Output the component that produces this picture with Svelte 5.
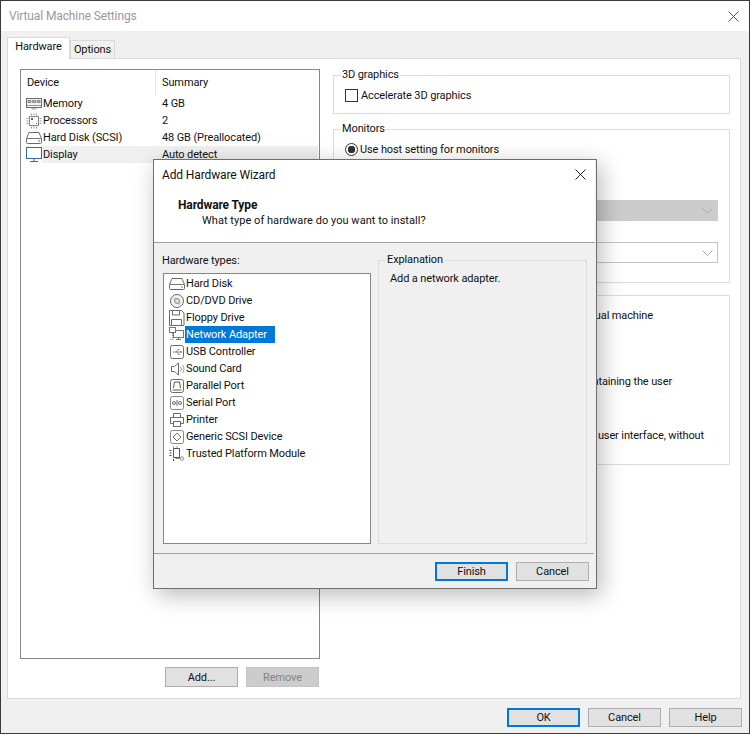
<script>
  const devices = [
    { icon: 'memory', name: 'Memory', summary: '4 GB' },
    { icon: 'cpu', name: 'Processors', summary: '2' },
    { icon: 'disk', name: 'Hard Disk (SCSI)', summary: '48 GB (Preallocated)' },
    { icon: 'display', name: 'Display', summary: 'Auto detect', hover: true }
  ];
  const types = [
    { icon: 'disk', name: 'Hard Disk' },
    { icon: 'cd', name: 'CD/DVD Drive' },
    { icon: 'floppy', name: 'Floppy Drive' },
    { icon: 'net', name: 'Network Adapter', selected: true },
    { icon: 'usb', name: 'USB Controller' },
    { icon: 'sound', name: 'Sound Card' },
    { icon: 'parallel', name: 'Parallel Port' },
    { icon: 'serial', name: 'Serial Port' },
    { icon: 'printer', name: 'Printer' },
    { icon: 'scsi', name: 'Generic SCSI Device' },
    { icon: 'tpm', name: 'Trusted Platform Module' }
  ];
</script>

{#snippet icon(kind)}
  <svg class="ico" width="16" height="16" viewBox="0 0 16 16" fill="none" stroke="#6a6a6a" stroke-width="1">
    {#if kind === 'memory'}
      <rect x="0.5" y="2.5" width="15" height="9" fill="#f2f2f2"/>
      <path d="M2 4.500h3v2H2zM6.500 4.500h3v2h-3zM11 4.500h3v2h-3z" fill="#bbb" stroke="#888"/>
      <path d="M1 9.500h14M6 11.500v1.500h4v-1.500" stroke="#999"/>
    {:else if kind === 'cpu'}
      <rect x="3.500" y="3.500" width="9" height="9" fill="#fff" stroke="#888"/>
      <path d="M5.500 .5v2M8 .5v2M10.500 .5v2M5.500 13.500v2M8 13.500v2M10.500 13.500v2M.5 5.500h2M.5 8h2M.5 10.500h2M13.500 5.500h2M13.500 8h2M13.500 10.500h2" stroke="#999"/>
      <path d="M5 5h2v2H5zM10 10h1v1h-1z" fill="#666" stroke="none"/>
    {:else if kind === 'disk'}
      <path d="M.5 8.500 3 2.500h10l2.500 6v4a1 1 0 0 1-1 1h-13a1 1 0 0 1-1-1z" fill="#fff"/>
      <path d="M1 8.500h14M12 11h2" stroke="#777"/>
    {:else if kind === 'display'}
      <rect x="0.500" y="0.500" width="15" height="11" stroke="#2f6ea5" fill="#fff"/>
      <path d="M4 14.500h8M8 12v2" stroke="#2f6ea5"/>
    {:else if kind === 'cd'}
      <circle cx="8" cy="8" r="6.500" fill="#f4f4f4"/>
      <circle cx="8" cy="8" r="2.500" fill="#ddd" stroke="#888"/>
      <path d="M4.500 6.500A4 4 0 0 1 6.500 4.500M11.500 9.500A4 4 0 0 1 9.500 11.500" stroke="#aaa"/>
    {:else if kind === 'floppy'}
      <path d="M.5 .5h12l2.500 2.500v12.500H.5z" fill="#fff"/>
      <path d="M3.500 .5v4.500h7V.5M2.500 15.500V9.500h10v6"/>
    {:else if kind === 'net'}
      <rect x="4.500" y="3.500" width="10" height="7" fill="#fff" stroke="#777"/>
      <rect x="0.500" y="0.500" width="6" height="5" fill="#fff" stroke="#777"/>
      <path d="M9.500 10.500v2M7 12.500h5" stroke="#777"/>
      <path d="M1.500 12.500h4M3.500 6v6" stroke="#2f86cf" stroke-dasharray="1 1"/>
    {:else if kind === 'usb'}
      <rect x="1.500" y="1.500" width="13" height="13" rx="2" fill="#fff"/>
      <path d="M4 8h8M7 8l2-2.500h1.500M8 8l1.500 2.500H11" stroke="#888"/>
      <circle cx="12" cy="8" r="1" fill="#888" stroke="none"/>
    {:else if kind === 'sound'}
      <path d="M2.500 5.500h3l4-3.500v12l-4-3.500h-3z" fill="#fff"/>
      <path d="M11.500 5.500a4 4 0 0 1 0 5M13.500 4a6 6 0 0 1 0 8" stroke="#999"/>
    {:else if kind === 'parallel'}
      <rect x="1.500" y="1.500" width="13" height="13" rx="2" fill="#fff"/>
      <path d="M4.500 10 5.500 4h5l1 6M3.500 12h9" stroke="#555"/>
    {:else if kind === 'serial'}
      <rect x="1.500" y="1.500" width="13" height="13" rx="2" fill="#fff" stroke="#888"/>
      <circle cx="5" cy="8" r="1.500" stroke="#666"/>
      <circle cx="11" cy="8" r="1.500" stroke="#666"/>
      <path d="M8 5v6" stroke="#666"/>
    {:else if kind === 'printer'}
      <path d="M4.500 5V1.500h7V5M1.500 5.500h13v6h-3M4.500 11.500h-3v-6" fill="#fff"/>
      <rect x="4.500" y="9.500" width="7" height="5" fill="#fff"/>
    {:else if kind === 'scsi'}
      <rect x="1.500" y="1.500" width="13" height="13" rx="2" fill="#fff" stroke="#888"/>
      <path d="M8 4 12 8 8 12 4 8z" stroke="#777"/>
    {:else if kind === 'tpm'}
      <path d="M4.500 2.500h6v9h-6z" fill="#fff" stroke="#555"/>
      <path d="M.5 4.500h2M.5 7h2M.5 9.500h2M4.500 .5v1M8 .5v1M4.500 13v2" stroke="#444"/>
      <circle cx="13" cy="12.500" r="1.700" stroke="#888"/>
      <path d="M6.500 12.500h5" stroke="#888"/>
    {/if}
  </svg>
{/snippet}

{#snippet closeX()}
  <svg width="11" height="11" viewBox="0 0 11 11" fill="none" stroke="currentColor"><path d="M.5.500l10 10M10.500.500l-10 10"/></svg>
{/snippet}

{#snippet chevron()}
  <svg class="chev" width="11" height="6" viewBox="0 0 11 6" fill="none" stroke="#a8a8a8"><path d="M.5.500l5 5 5-5"/></svg>
{/snippet}

<div class="window">
  <header class="titlebar">
    <span>Virtual Machine Settings</span>
    <span class="close dim">{@render closeX()}</span>
  </header>

  <div class="body">
    <div class="tabs">
      <div class="tab active">Hardware</div>
      <div class="tab">Options</div>
    </div>

    <div class="panel">
      <div class="leftcol">
        <div class="devices">
          <div class="devhead">
            <div class="c1">Device</div>
            <div class="c2">Summary</div>
          </div>
          {#each devices as d}
            <div class="devrow">
              <span class="devicon">{@render icon(d.icon)}</span>
              <div class="devcells" class:hover={d.hover}>
                <div class="devname">{d.name}</div>
                <div>{d.summary}</div>
              </div>
            </div>
          {/each}
        </div>
        <div class="devbtns">
          <div class="btn">Add...</div>
          <div class="btn disabled">Remove</div>
        </div>
      </div>

      <div class="rightcol">
        <fieldset class="group g3d">
          <legend>3D graphics</legend>
          <div class="opt"><span class="check"></span><span>Accelerate 3D graphics</span></div>
        </fieldset>
        <fieldset class="group gmon">
          <legend>Monitors</legend>
          <div class="opt radio-opt"><span class="radio"></span><span>Use host setting for monitors</span></div>
          <div class="select gray">{@render chevron()}</div>
          <div class="select">{@render chevron()}</div>
        </fieldset>
        <div class="group gscale">
          <div class="line l1">Automatically adapt to the size of the virtual machine</div>
          <div class="line l2">Stretch the display while maintaining the user</div>
          <div class="line l3">Stretch to fill the user interface, without</div>
        </div>
      </div>
    </div>

    <div class="footer">
      <div class="btn primary">OK</div>
      <div class="btn">Cancel</div>
      <div class="btn">Help</div>
    </div>
  </div>

  <div class="dialog">
    <div class="dhead">
      <div class="dtitle">
        <span>Add Hardware Wizard</span>
        <span class="close">{@render closeX()}</span>
      </div>
      <div class="dstrong">Hardware Type</div>
      <div class="dsub">What type of hardware do you want to install?</div>
    </div>
    <div class="dmain">
      <div class="typescol">
        <div class="typeslabel">Hardware types:</div>
        <div class="typeslist">
          {#each types as t}
            <div class="typerow">
              {@render icon(t.icon)}
              <span class="typename" class:selected={t.selected}>{t.name}</span>
            </div>
          {/each}
        </div>
      </div>
      <fieldset class="explain">
        <legend>Explanation</legend>
        <div class="explaintext">Add a network adapter.</div>
      </fieldset>
    </div>
    <div class="dfoot">
      <div class="btn primary">Finish</div>
      <div class="btn">Cancel</div>
    </div>
  </div>
</div>

<style>
  :global(body) { margin: 0; background: #f0f0f0; }
  .window {
    position: relative;
    box-sizing: border-box;
    width: 750px;
    height: 734px;
    border: 1px solid #3a3a3a;
    background: #f0f0f0;
    font: 11px Roboto, "Noto Sans", sans-serif;
    letter-spacing: -0.12px;
    color: #111;
    display: flex;
    flex-direction: column;
    overflow: hidden;
  }
  .titlebar {
    height: 30px;
    flex: none;
    background: #fff;
    display: flex;
    align-items: center;
    justify-content: space-between;
    padding: 0 10px 0 8px;
    color: #999;
    font-size: 12px;
  }
  .close { display: flex; color: #222; }
  .dim { color: #555; }
  .body { flex: 1; display: flex; flex-direction: column; padding: 6px 7px 0 6px; }
  .tabs { display: flex; height: 21px; align-items: flex-end; position: relative; z-index: 1; }
  .tab {
    box-sizing: border-box;
    width: 45px;
    height: 18px;
    border: 1px solid #d9d9d9;
    border-bottom: 0;
    text-align: center;
    line-height: 18px;
  }
  .tab.active { width: 63px; height: 22px; background: #fff; line-height: 18px; margin-bottom: -1px; }
  .panel {
    box-sizing: border-box;
    height: 641px;
    width: 734px;
    background: #fff;
    border: 1px solid #d9d9d9;
    display: flex;
    padding: 10px 10px 0 12px;
    gap: 13px;
  }
  .leftcol { width: 300px; flex: none; }
  .devices {
    box-sizing: border-box;
    height: 590px;
    border: 1px solid #82878c;
  }
  .devhead { display: flex; height: 25px; line-height: 26px; }
  .c1 { width: 128px; padding-left: 6px; border-right: 1px solid #e5e5e5; }
  .c2 { padding-left: 6px; }
  .devrow { display: flex; height: 17px; line-height: 17px; align-items: center; padding-left: 5px; }
  .devicon { width: 16px; height: 16px; flex: none; display: flex; }
  .devcells { flex: 1; display: flex; margin-right: 1px; height: 17px; }
  .devcells.hover { background: #f0f0f0; }
  .devname { width: 119px; flex: none; padding-left: 1px; }
  .devbtns { display: flex; justify-content: flex-end; gap: 8px; margin: 8px 1px 0 0; }
  .devbtns .btn { height: 20px; }
  .btn {
    box-sizing: border-box;
    width: 73px;
    height: 19px;
    background: #e1e1e1;
    border: 1px solid #adadad;
    display: flex;
    align-items: center;
    justify-content: center;
  }
  .btn.primary { border: 2px solid #0078d7; }
  .btn.disabled { background: #ccc; border-color: #c4c4c4; color: #838383; }
  .rightcol { width: 397px; flex: none; display: flex; flex-direction: column; }
  .group {
    box-sizing: border-box;
    margin: 0;
    padding: 0 11px;
    border: 1px solid #dcdcdc;
    min-width: 0;
    position: relative;
  }
  legend { padding: 0 1px; margin-left: -4px; line-height: 16px; }
  .g3d { height: 47px; margin-top: -2px; }
  .gmon { height: 162px; margin-top: 7px; }
  .gscale { height: 170px; margin-top: 12px; }
  .opt { display: flex; align-items: center; gap: 3px; height: 16px; }
  .g3d .opt { margin-top: 4px; }
  .gmon .opt { margin-top: 4px; gap: 2px; }
  .check { width: 13px; height: 13px; box-sizing: border-box; border: 1px solid #333; background: #fff; }
  .radio {
    box-sizing: border-box;
    width: 13px;
    height: 13px;
    border: 1px solid #333;
    border-radius: 50%;
    background: radial-gradient(circle, #333 0 3.500px, #fff 4px);
  }
  .select {
    box-sizing: border-box;
    height: 21px;
    width: 373px;
    border: 1px solid #c4c4c4;
    display: flex;
    align-items: center;
    justify-content: flex-end;
    padding-right: 4px;
    margin-top: 21px;
  }
  .select.gray { background: #ccc; border-color: #ccc; margin-top: 43px; }
  .line { position: absolute; white-space: nowrap; line-height: 16px; }
  .l1 { top: 12px; right: 76px; }
  .l2 { top: 78px; right: 57px; }
  .l3 { top: 132px; right: 25px; }

  .dialog {
    position: absolute;
    left: 152px;
    top: 158px;
    width: 444px;
    height: 430px;
    box-sizing: border-box;
    background: #f0f0f0;
    border: 1px solid #6e6e6e;
    box-shadow: 4px 6px 22px rgba(0, 0, 0, 0.28);
    display: flex;
    flex-direction: column;
  }
  .dhead {
    box-sizing: border-box;
    height: 83px;
    background: #fff;
    flex: none;
    border-bottom: 1px solid #a0a0a0;
    margin-right: 1px;
  }
  .dtitle {
    display: flex;
    align-items: center;
    justify-content: space-between;
    height: 29px;
    padding: 0 9px 0 8px;
    font-size: 12px;
  }
  .dstrong { font-weight: 700; font-size: 12px; margin: 8px 0 0 24px; line-height: 16px; }
  .dsub { margin: 0 0 0 48px; line-height: 16px; letter-spacing: 0.04px; }
  .dmain { flex: 1; display: flex; gap: 6px; padding: 10px 9px 9px 8px; min-height: 0; }
  .typescol { width: 209px; flex: none; display: flex; flex-direction: column; margin-right: 1px; }
  .typeslabel { line-height: 16px; margin-bottom: 4px; }
  .typeslist {
    flex: 1;
    margin-left: 1px;
    background: #fff;
    border: 1px solid #82878c;
    padding: 1px 0 0 5px;
  }
  .typerow { display: flex; height: 17px; align-items: center; }
  .typename { padding: 0 6px 0 1px; line-height: 17px; height: 17px; }
  .typename.selected { background: #0078d7; color: #fff; padding-right: 8px; }
  .explain {
    flex: 1;
    margin: -1px 0 0 0;
    padding: 2px 11px;
    border: 1px solid #dcdcdc;
    min-width: 0;
  }
  .explain legend { margin-left: -5px; padding: 0 2px; }
  .explaintext { margin-top: 2px; }
  .dfoot {
    box-sizing: border-box;
    height: 35px;
    flex: none;
    border-top: 1px solid #a0a0a0;
    margin-right: 2px;
    display: flex;
    justify-content: flex-end;
    gap: 8px;
    padding: 8px 5px 0 0;
  }
  .footer { display: flex; justify-content: flex-end; gap: 8px; margin-top: 9px; }
</style>
